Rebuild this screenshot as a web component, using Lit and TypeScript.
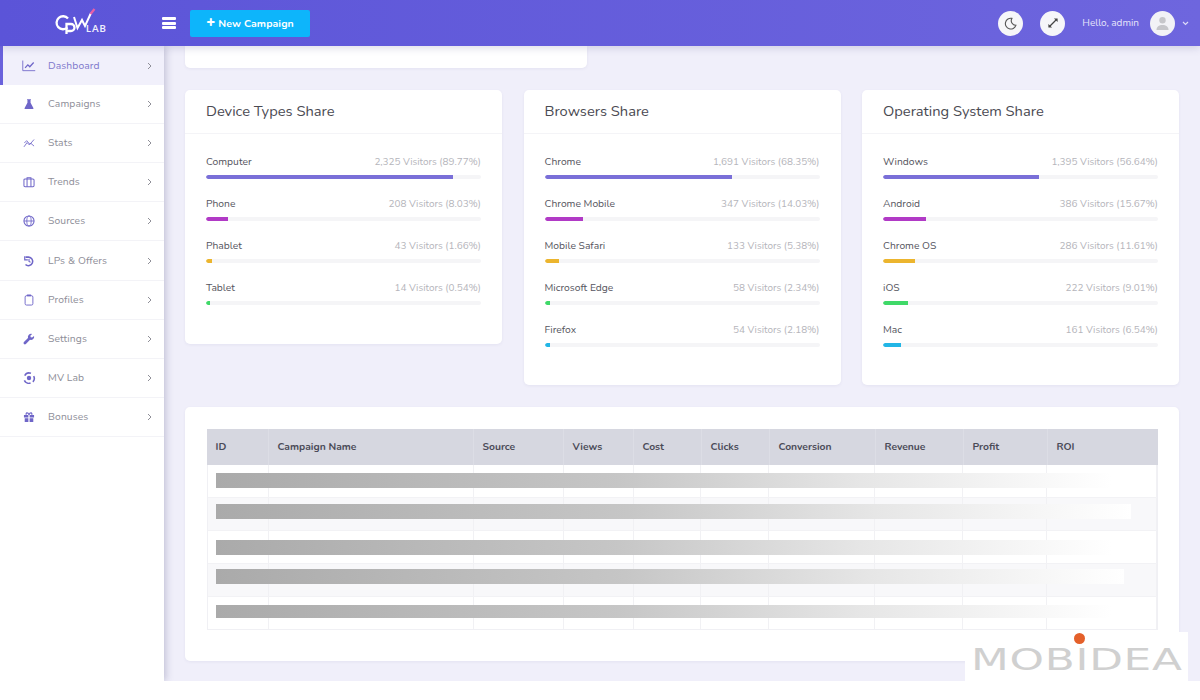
import { LitElement, html, css, svg } from "lit";
import { customElement } from "lit/decorators.js";

const icons: Record<string, unknown> = {
  dash: svg`<path d="M1 2v13h16" fill="none" stroke="currentColor" stroke-width="1.100"/><path d="M4 11.500l3.500-4 2.500 2.500L15 4.500" fill="none" stroke="currentColor" stroke-width="1.600"/>`,
  flask: svg`<path d="M6.500 3h5v1H11v3.500l3.600 6.500c.4.800 0 1.500-.8 1.500H4.200c-.8 0-1.200-.7-.8-1.500L7 7.500V4h-.5z" fill="currentColor"/>`,
  stats: svg`<path d="M2.500 14l4-5.500 3 3 6-7M3 9l3-3 3.500 4 2-.5 4 3.500" fill="none" stroke="currentColor" stroke-width="1.100"/>`,
  trends: svg`<rect x="2.500" y="5" width="13" height="10" rx="1.500" fill="none" stroke="currentColor" stroke-width="1.300"/><path d="M6.500 15V3.500h5V15" fill="none" stroke="currentColor" stroke-width="1.300"/>`,
  globe: svg`<circle cx="9" cy="9" r="6.500" fill="none" stroke="currentColor" stroke-width="1.400"/><ellipse cx="9" cy="9" rx="2.800" ry="6.500" fill="none" stroke="currentColor" stroke-width="1.100"/><path d="M2.500 9h13" stroke="currentColor" stroke-width="1.100"/>`,
  lps: svg`<path d="M4.500 4h4a5.500 5.500 0 1 1-4 9.500" fill="none" stroke="currentColor" stroke-width="2"/><path d="M3.500 3v4.500h4" fill="none" stroke="currentColor" stroke-width="1.500"/><path d="M9 6.500v3l2 1" fill="none" stroke="currentColor" stroke-width="1.400"/>`,
  clip: svg`<rect x="4" y="3.500" width="10" height="12" rx="1.800" fill="none" stroke="currentColor" stroke-width="1.200"/><rect x="6" y="2" width="6" height="2.300" rx="1" fill="currentColor"/>`,
  wrench: svg`<path d="M15.500 5l-2.500 2.200-1.800-.6-.5-1.900L13 2.500a4.200 4.200 0 0 0-5.300 5.200L2.500 13a1.700 1.700 0 0 0 2.500 2.500l5.300-5.400A4.200 4.200 0 0 0 15.500 5z" fill="currentColor"/>`,
  mv: svg`<path d="M3.500 6a6.500 6.500 0 0 1 8-3M15 6.500a6.500 6.500 0 0 1-1 7.500M11 15.500a6.500 6.500 0 0 1-8-3.500" fill="none" stroke="currentColor" stroke-width="2"/><circle cx="9" cy="9" r="2.800" fill="currentColor"/>`,
  gift: svg`<path d="M2.500 6.500h13v3h-13zM3.500 10.500h11V15.500h-11z" fill="currentColor"/><path d="M9 6C7.500 2.500 4.500 3.500 5.500 6M9 6c1.500-3.500 4.500-2.500 3.500 0" fill="none" stroke="currentColor" stroke-width="1.500"/><path d="M8.200 6.500h1.600v9H8.200z" fill="#fff"/>`,
};

const nav: [string, string][] = [
  ["Dashboard", "dash"], ["Campaigns", "flask"], ["Stats", "stats"], ["Trends", "trends"], ["Sources", "globe"],
  ["LPs & Offers", "lps"], ["Profiles", "clip"], ["Settings", "wrench"], ["MV Lab", "mv"], ["Bonuses", "gift"],
];

const colors = ["#7a6fd8", "#b13ac6", "#ecb52e", "#3fd968", "#22b6e6"];

type Row = [string, string, number];
const cards: { title: string; rows: Row[]; cls: string }[] = [
  { title: "Device Types Share", cls: "", rows: [
    ["Computer", "2,325 Visitors (89.77%)", 89.77], ["Phone", "208 Visitors (8.03%)", 8.03],
    ["Phablet", "43 Visitors (1.66%)", 2.2], ["Tablet", "14 Visitors (0.54%)", 1.4],
  ]},
  { title: "Browsers Share", cls: "tall", rows: [
    ["Chrome", "1,691 Visitors (68.35%)", 68.35], ["Chrome Mobile", "347 Visitors (14.03%)", 14.03],
    ["Mobile Safari", "133 Visitors (5.38%)", 5.2], ["Microsoft Edge", "58 Visitors (2.34%)", 2],
    ["Firefox", "54 Visitors (2.18%)", 2],
  ]},
  { title: "Operating System Share", cls: "tall", rows: [
    ["Windows", "1,395 Visitors (56.64%)", 56.64], ["Android", "386 Visitors (15.67%)", 15.67],
    ["Chrome OS", "286 Visitors (11.61%)", 11.61], ["iOS", "222 Visitors (9.01%)", 9.01],
    ["Mac", "161 Visitors (6.54%)", 6.54],
  ]},
];

const cols: [string, number][] = [
  ["ID", 62], ["Campaign Name", 205], ["Source", 90], ["Views", 70], ["Cost", 68], ["Clicks", 68],
  ["Conversion", 106], ["Revenue", 88], ["Profit", 84], ["ROI", 110],
];

// width, height, top offset inside the row, striped row, row height
const tableRows: [number, number, number, boolean, number][] = [
  [896, 15, 8, false, 33], [915, 15, 6, true, 33], [896, 15, 9, false, 33], [908, 15, 5, true, 33], [896, 13, 8, false, 32],
];

@customElement("app-root")
export class AppRoot extends LitElement {
  static styles = css`
    :host { display: block; width: 1200px; height: 700px; overflow: hidden; position: relative; background: #fff;
      font-family: "Nunito", "Lato", "Open Sans", sans-serif; color: #4b4b55; }
    * { box-sizing: border-box; }
    .top { height: 46px; display: flex; align-items: center; background: linear-gradient(90deg, #5b54d8, #6e66de);
      position: relative; z-index: 3; box-shadow: 0 2px 8px rgba(80,80,140,.2); }
    .logo { width: 164px; height: 46px; flex: none; margin-right: -2px; }
    .logo svg { display: block; }
    .burger { width: 14px; display: flex; flex-direction: column; gap: 1.500px; }
    .burger i { display: block; height: 3px; background: #fff; border-radius: 1px; }
    .new { margin-left: 14px; width: 120px; height: 27px; background: #0db5fb; border-radius: 2px; color: #fff; font-size: 10.500px;
      font-weight: 700; display: flex; align-items: center; justify-content: center; gap: 3px; letter-spacing: .1px; }
    .new b { font-size: 15px; line-height: 1; font-weight: 900; margin-top: -2px; }
    .right { margin-left: auto; display: flex; align-items: center; padding-right: 11px; }
    .round { width: 25px; height: 25px; border-radius: 50%; background: #f6f6f9; color: #555; display: flex; align-items: center; justify-content: center; margin-right: 17px; }
    .hello { color: #e6e4fa; font-size: 10px; margin: 0 11px 0 0; }
    .avatar { width: 25px; height: 25px; border-radius: 50%; background: #f2f2f6; display: flex; align-items: center; justify-content: center; }
    .caret { margin-left: 7px; }
    .body { display: flex; height: 635px; background: #f0effa; overflow: hidden; }
    .side { width: 164px; flex: none; background: #fff; box-shadow: 2px 0 7px rgba(60,60,110,.25); position: relative; z-index: 2; }
    .item { height: 39.100px; display: flex; align-items: center; padding: 0 12px 0 22px; color: #8e8e98; font-size: 10.300px;
      border-bottom: 1px solid #f3f3f7; }
    .item svg.ic { width: 14px; height: 14px; color: #6f66c8; margin-right: 12px; flex: none; }
    .item span { flex: 1; letter-spacing: .1px; }
    .item.on { background: #f1f0fb; color: #7f78cc; box-shadow: inset 3px 0 0 #6a62dc; border-bottom: none; }
    .main { flex: 1; padding: 0 21px; overflow: hidden; display: flex; flex-direction: column; gap: 22px; }
    .stub { width: 402px; height: 22px; background: #fff; border-radius: 0 0 5px 5px; box-shadow: 0 1px 3px rgba(90,90,140,.08); flex: none; }
    .cards { display: grid; grid-template-columns: repeat(3, 317px); column-gap: 21.500px; align-items: start; }
    .card { background: #fff; border-radius: 5px; box-shadow: 0 1px 3px rgba(90,90,140,.08); height: 254px; }
    .card.tall { height: 295px; }
    .card h3 { margin: 0; height: 44px; padding: 0 21px 2px; display: flex; align-items: center; font-size: 14.700px; font-weight: 400;
      color: #4a4a52; border-bottom: 1px solid #f4f4f7; }
    .rows { padding: 21px 21px 0; display: flex; flex-direction: column; gap: 17px; }
    .rowhead { display: flex; justify-content: space-between; font-size: 10.300px; line-height: 14px; margin-bottom: 6px; color: #55555e; }
    .rowhead em { font-style: normal; font-size: 9.950px; color: #b5b5bb; }
    .track { height: 4px; border-radius: 2px; background: #f5f5f7; overflow: hidden; margin-bottom: 1px; }
    .fill { height: 100%; border-radius: 2px 0 0 2px; }
    .tablecard { background: #fff; border-radius: 5px; height: 254px; padding: 22px 21px 0 21.500px; box-shadow: 0 1px 3px rgba(90,90,140,.08); flex: none; }
    .thead { display: flex; height: 36px; background: #d6d7e0; width: 951px; }
    .th { display: flex; align-items: center; padding-left: 9px; font-size: 10.300px; font-weight: 700; color: #4b4b58; border-right: 1px solid #dcdde5; }
    .th:last-child, .td:last-child { border-right: none; }
    .tbody { border: 1px solid #f0f0f4; border-top: none; width: 951px; }
    .tr { display: flex; position: relative; border-bottom: 1px solid #f2f2f5; }
    .tr:last-child { border-bottom: none; }
    .tr.alt { background: #f8f8fa; }
    .td { border-right: 1px solid #f1f1f4; }
    .blur { position: absolute; left: 8px; background: linear-gradient(90deg, #aaa, #c6c6c6 45%, #e6e6e6 72%, #fff 100%); }
    .wm { position: absolute; left: 965px; top: 632px; width: 223px; height: 49px; background: #fff; }
    .wm-text { position: absolute; left: 6px; top: 10px; font-family: "DejaVu Sans", sans-serif; font-size: 30px; line-height: 36px; color: #d0d0d0;
      transform-origin: 0 50%; transform: scaleX(1.46); letter-spacing: .5px; white-space: nowrap; }
    .dot { position: absolute; left: 109px; top: 1px; width: 11px; height: 11px; border-radius: 50%; background: #e4602a; z-index: 1; }
  `;

  render() {
    return html`
      <div class="top">
        <div class="logo">
          <svg width="164" height="46" viewBox="0 0 164 46">
            <path d="M68 18.500a6.500 6.500 0 1 0-.5 9" fill="none" stroke="#fff" stroke-width="2.300"/>
            <path d="M66.500 34V24h4.500a3.500 3.500 0 0 1 0 7h-4" fill="none" stroke="#fff" stroke-width="2.300"/>
            <path d="M74 17l3.500 11 4.500-8 3 6 6-13" fill="none" stroke="#fff" stroke-width="2"/>
            <path d="M90.500 14l4-5" stroke="#e75fa8" stroke-width="2.300"/>
            <text x="86" y="31.500" fill="#eeeefc" font-size="9.500" font-weight="700" letter-spacing="1" font-family="Lato, sans-serif">LAB</text>
          </svg>
        </div>
        <div class="burger"><i></i><i></i><i></i></div>
        <div class="new"><b>+</b>New Campaign</div>
        <div class="right">
          <div class="round">
            <svg width="13" height="13" viewBox="0 0 14 14"><path d="M8.500 1.500A5.800 5.800 0 1 0 12.800 9 5 5 0 0 1 8.500 1.500z" fill="none" stroke="#555" stroke-width="1.200"/></svg>
          </div>
          <div class="round">
            <svg width="12" height="12" viewBox="0 0 13 13"><path d="M3 10l7-7" stroke="#444" stroke-width="1.300"/><path d="M7.500 1.500h4v4zM1.500 7.500v4h4z" fill="#444"/></svg>
          </div>
          <div class="hello">Hello, admin</div>
          <div class="avatar">
            <svg width="15" height="15" viewBox="0 0 15 15"><circle cx="7.500" cy="4.200" r="3.200" fill="#c6c6ca"/><path d="M1.500 14c0-3.500 2.500-5 6-5s6 1.500 6 5z" fill="#c6c6ca"/></svg>
          </div>
          <svg class="caret" width="7" height="5" viewBox="0 0 7 5"><path d="M1 1l2.500 2.500L6 1" fill="none" stroke="#dcdaf8" stroke-width="1.200"/></svg>
        </div>
      </div>
      <div class="body">
        <div class="side">
          ${nav.map(([label, ic], i) => html`
            <div class="item ${i === 0 ? "on" : ""}">
              <svg class="ic" viewBox="0 0 18 18">${icons[ic]}</svg>
              <span>${label}</span>
              <svg width="5" height="8" viewBox="0 0 5 8"><path d="M1 1l3 3-3 3" fill="none" stroke="#8f8f98" stroke-width="1"/></svg>
            </div>`)}
        </div>
        <div class="main">
          <div class="stub"></div>
          <div class="cards">
            ${cards.map(c => html`
              <div class="card ${c.cls}">
                <h3>${c.title}</h3>
                <div class="rows">
                  ${c.rows.map((r, i) => html`
                    <div>
                      <div class="rowhead"><span>${r[0]}</span><em>${r[1]}</em></div>
                      <div class="track"><div class="fill" style="width:${r[2]}%;background:${colors[i]}"></div></div>
                    </div>`)}
                </div>
              </div>`)}
          </div>
          <div class="tablecard">
            <div class="thead">
              ${cols.map(([t, w]) => html`<div class="th" style="width:${w}px">${t}</div>`)}
            </div>
            <div class="tbody">
              ${tableRows.map(([w, h, y, alt, rh]) => html`
                <div class="tr ${alt ? "alt" : ""}" style="height:${rh}px">
                  ${cols.map(([, cw]) => html`<div class="td" style="width:${cw}px"></div>`)}
                  <div class="blur" style="width:${w}px;height:${h}px;top:${y}px"></div>
                </div>`)}
            </div>
          </div>
        </div>
      </div>
      <div class="wm"><span class="dot"></span><span class="wm-text">MOBIDEA</span></div>
    `;
  }
}
